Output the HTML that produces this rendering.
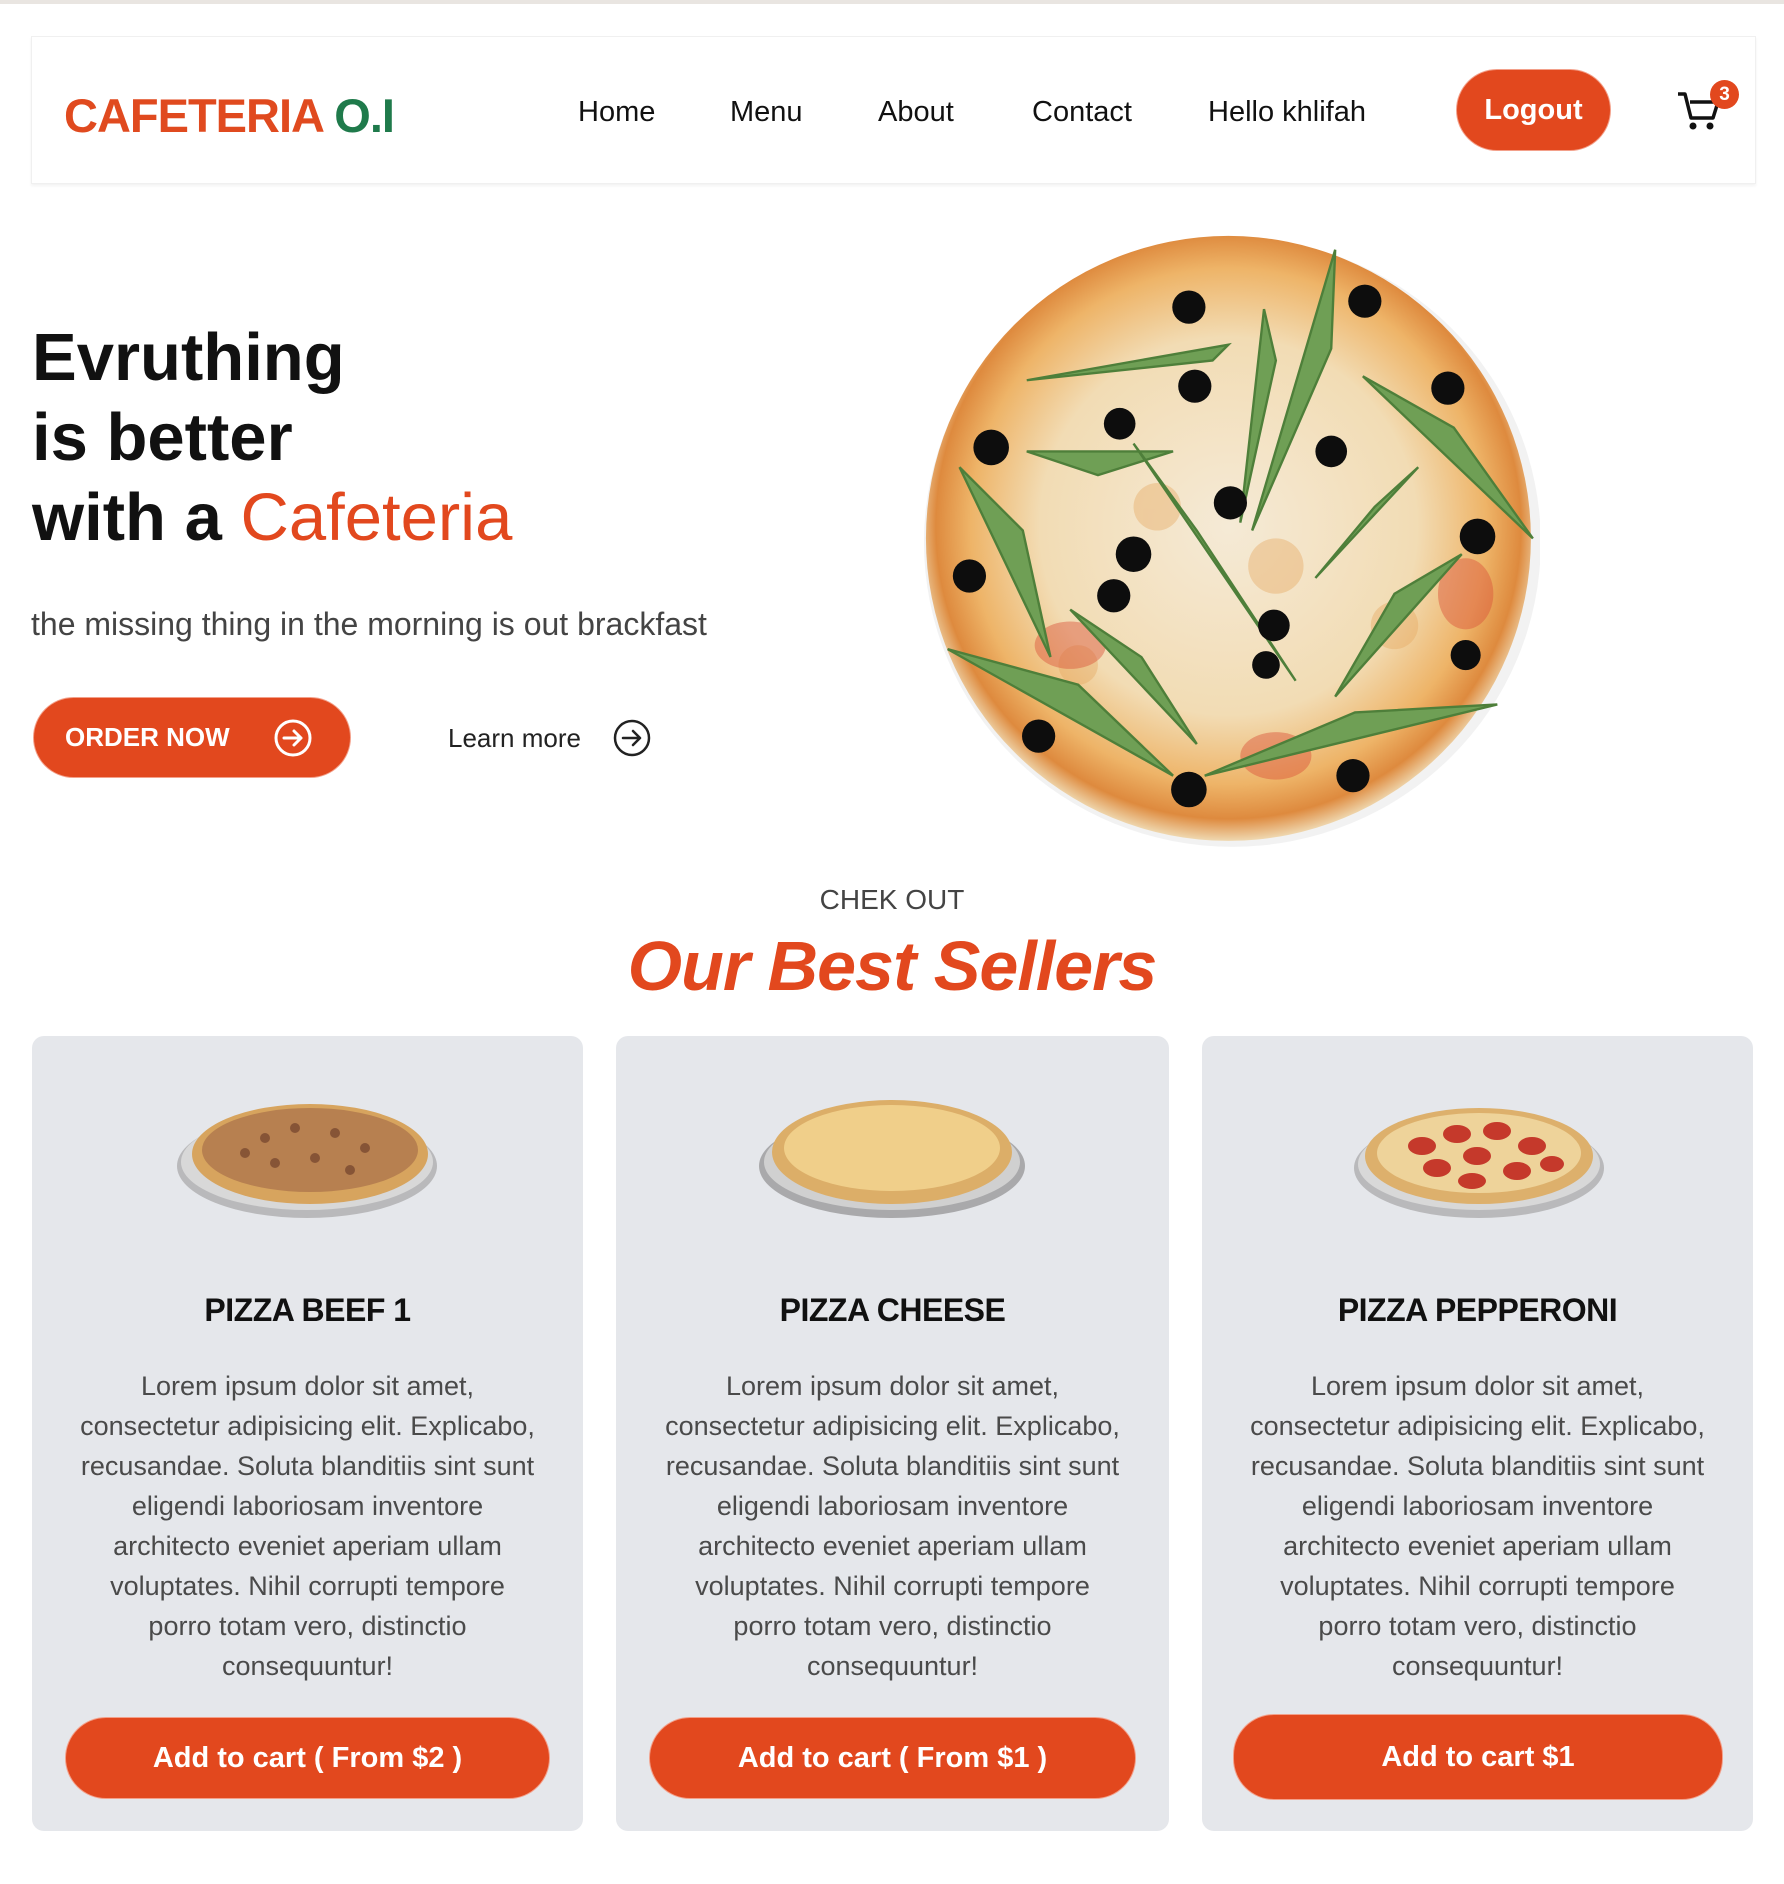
<!DOCTYPE html>
<html><head><meta charset="utf-8">
<style>
*{margin:0;padding:0;box-sizing:border-box}
body{width:1784px;height:1884px;background:#fff;position:relative;overflow:hidden;font-family:"Liberation Sans",Arial,sans-serif;color:#111}
.abs{position:absolute}
.topline{left:0;top:0;width:1784px;height:4px;background:#e9e5e1}
.nav{left:31px;top:36px;width:1725px;height:148px;background:#fff;border:1px solid #f0f0f0;box-shadow:0 2px 3px rgba(0,0,0,.05)}
.logo{left:64px;top:88px;font-size:47px;font-weight:bold;color:#e04a1f;letter-spacing:-1px;white-space:nowrap}
.logo span{color:#1f7a4b}
.nl{top:96px;font-size:29px;color:#111;white-space:nowrap}
.logout{left:1457px;top:70px;width:153px;height:80px;border-radius:40px;background:#e2481e;color:#fff;font-size:29px;font-weight:bold;display:flex;align-items:center;justify-content:center;box-shadow:0 0 0 1px #f3a08a}
.badge{left:1710px;top:80px;width:29px;height:29px;border-radius:50%;background:#e2481e;color:#fff;font-size:19px;font-weight:bold;display:flex;align-items:center;justify-content:center}
.h1{left:32px;font-size:67px;font-weight:bold;color:#111;white-space:nowrap;line-height:80px}
.sub{left:31px;top:606px;font-size:32px;color:#444;white-space:nowrap}
.order{left:34px;top:698px;width:316px;height:79px;border-radius:40px;background:#e2481e;box-shadow:0 0 0 1px #f3a08a}
.order .t{position:absolute;left:31px;top:24px;color:#fff;font-size:26px;font-weight:bold}
.learn{left:448px;top:723px;font-size:26px;color:#222}
.chek{left:0;width:1784px;text-align:center;top:884px;font-size:28px;color:#444}
.best{left:0;width:1784px;text-align:center;top:926px;font-size:70px;font-weight:bold;font-style:italic;color:#e2481e;letter-spacing:-1px}
.card{top:1036px;height:795px;background:#e5e7eb;border-radius:12px}
.ct{top:1292px;width:100%;text-align:center;font-size:32px;font-weight:bold;color:#111;letter-spacing:-.5px}
.cp{top:1366px;width:100%;text-align:center;font-size:27px;line-height:40px;color:#4a4a4a;white-space:nowrap}
.btn{top:682px;height:80px;border-radius:40px;background:#e2481e;color:#fff;font-size:29px;font-weight:bold;display:flex;align-items:center;justify-content:center;box-shadow:0 0 0 1px #f3a08a}
</style></head><body>
<div class="abs topline"></div>
<div class="abs nav"></div>
<div class="abs logo">CAFETERIA <span>O.I</span></div>
<div class="abs nl" style="left:578px">Home</div>
<div class="abs nl" style="left:730px">Menu</div>
<div class="abs nl" style="left:878px">About</div>
<div class="abs nl" style="left:1032px">Contact</div>
<div class="abs nl" style="left:1208px">Hello khlifah</div>
<div class="abs logout">Logout</div>
<svg class="abs" style="left:1676px;top:88px" width="46" height="44" viewBox="0 0 46 44"><path d="M2 6h7l6 24h22l5-16H14" fill="none" stroke="#111" stroke-width="3.5" stroke-linejoin="round"/><circle cx="17" cy="38" r="3.5" fill="#111"/><circle cx="34" cy="38" r="3.5" fill="#111"/></svg>
<div class="abs badge">3</div>

<div class="abs h1" style="top:318px">Evruthing</div>
<div class="abs h1" style="top:398px">is better</div>
<div class="abs h1" style="top:478px">with a <span style="color:#e2481e;font-weight:normal">Cafeteria</span></div>
<div class="abs sub">the missing thing in the morning is out brackfast</div>
<div class="abs order"><div class="t">ORDER NOW</div>
<svg style="position:absolute;left:239px;top:20px" width="40" height="40" viewBox="0 0 40 40"><circle cx="20" cy="20" r="17" fill="none" stroke="#fff" stroke-width="3"/><path d="M11 20h17M21 13l7 7-7 7" fill="none" stroke="#fff" stroke-width="3" stroke-linecap="round" stroke-linejoin="round"/></svg></div>
<div class="abs learn">Learn more</div>
<svg class="abs" style="left:612px;top:718px" width="40" height="40" viewBox="0 0 40 40"><circle cx="20" cy="20" r="17" fill="none" stroke="#222" stroke-width="2.5"/><path d="M11 20h17M21 13l7 7-7 7" fill="none" stroke="#222" stroke-width="2.5" stroke-linecap="round" stroke-linejoin="round"/></svg>

<svg class="abs" style="left:920px;top:230px" width="620" height="620" viewBox="0 0 1568 1568">
<defs>
<radialGradient id="pz" cx="50%" cy="48%" r="52%">
<stop offset="0" stop-color="#f5ead6"/><stop offset=".6" stop-color="#f2dcb4"/><stop offset=".82" stop-color="#eeb468"/><stop offset=".93" stop-color="#de8a3e"/><stop offset="1" stop-color="#efd8b0"/></radialGradient>
</defs>
<ellipse cx="790" cy="790" rx="780" ry="770" fill="#000" opacity=".05"/>
<circle cx="780" cy="780" r="765" fill="url(#pz)"/>
<g fill="#e6a860" opacity=".4"><circle cx="600" cy="700" r="60"/><circle cx="900" cy="850" r="70"/><circle cx="1200" cy="1000" r="60"/><circle cx="400" cy="1100" r="50"/></g>
<g fill="#d9513a" opacity=".45"><ellipse cx="380" cy="1050" rx="90" ry="60"/><ellipse cx="900" cy="1330" rx="90" ry="60"/><ellipse cx="1380" cy="920" rx="70" ry="90"/></g>
<g fill="#6f9f55" stroke="#4e7f3a" stroke-width="6" stroke-linecap="round">
<path d="M270 380 L780 290 L740 330 Z"/><path d="M810 740 L870 200 L900 330 Z"/><path d="M840 760 L1050 50 L1040 300 Z"/>
<path d="M1120 370 L1550 780 L1350 500 Z"/><path d="M1000 880 L1260 600 L1150 700 Z"/><path d="M1050 1180 L1370 820 L1200 920 Z"/>
<path d="M100 600 L330 1080 L260 760 Z"/><path d="M70 1060 L640 1380 L400 1150 Z"/><path d="M270 560 L640 560 L450 620 Z"/>
<path d="M540 540 L950 1140 L700 760 Z"/><path d="M380 960 L700 1300 L560 1080 Z"/><path d="M720 1380 L1460 1200 L1100 1220 Z"/>
</g>
<g fill="#0d0d0d">
<circle cx="680" cy="195" r="42"/><circle cx="1125" cy="180" r="42"/><circle cx="695" cy="395" r="42"/><circle cx="1335" cy="400" r="42"/>
<circle cx="180" cy="550" r="45"/><circle cx="505" cy="490" r="40"/><circle cx="1040" cy="560" r="40"/><circle cx="785" cy="690" r="42"/>
<circle cx="1410" cy="775" r="45"/><circle cx="540" cy="820" r="45"/><circle cx="125" cy="875" r="42"/><circle cx="490" cy="925" r="42"/>
<circle cx="895" cy="1000" r="40"/><circle cx="1380" cy="1075" r="38"/><circle cx="875" cy="1100" r="35"/><circle cx="300" cy="1280" r="42"/>
<circle cx="680" cy="1415" r="45"/><circle cx="1095" cy="1380" r="42"/></g>
</svg>

<div class="abs chek">CHEK OUT</div>
<div class="abs best">Our Best Sellers</div>

<div class="abs card" style="left:32px;width:551px">
<svg style="position:absolute;left:143px;top:52px" width="264" height="140" viewBox="0 0 264 140"><ellipse cx="132" cy="78" rx="130" ry="52" fill="#b9b9bb"/><ellipse cx="132" cy="74" rx="126" ry="48" fill="#d8d8d8"/><ellipse cx="135" cy="66" rx="118" ry="50" fill="#d7a45e"/><ellipse cx="135" cy="62" rx="108" ry="42" fill="#b78050"/><g fill="#7a4a30" opacity=".8"><circle cx="90" cy="50" r="5"/><circle cx="120" cy="40" r="5"/><circle cx="160" cy="45" r="5"/><circle cx="190" cy="60" r="5"/><circle cx="100" cy="75" r="5"/><circle cx="140" cy="70" r="5"/><circle cx="175" cy="82" r="5"/><circle cx="70" cy="65" r="5"/></g></svg>
<div class="abs ct" style="top:256px">PIZZA BEEF 1</div>
<div class="abs cp" style="top:330px">Lorem ipsum dolor sit amet,<br>consectetur adipisicing elit. Explicabo,<br>recusandae. Soluta blanditiis sint sunt<br>eligendi laboriosam inventore<br>architecto eveniet aperiam ullam<br>voluptates. Nihil corrupti tempore<br>porro totam vero, distinctio<br>consequuntur!</div>
<div class="abs btn" style="left:34px;width:483px">Add to cart ( From $2 )</div>
</div>

<div class="abs card" style="left:616px;width:553px">
<svg style="position:absolute;left:141px;top:50px" width="270" height="140" viewBox="0 0 270 140"><ellipse cx="135" cy="80" rx="133" ry="52" fill="#a9a9ab"/><ellipse cx="135" cy="76" rx="128" ry="48" fill="#d0d0d0"/><ellipse cx="135" cy="66" rx="120" ry="52" fill="#dcae68"/><ellipse cx="135" cy="62" rx="108" ry="43" fill="#f0cf8a"/></svg>
<div class="abs ct" style="top:256px">PIZZA CHEESE</div>
<div class="abs cp" style="top:330px">Lorem ipsum dolor sit amet,<br>consectetur adipisicing elit. Explicabo,<br>recusandae. Soluta blanditiis sint sunt<br>eligendi laboriosam inventore<br>architecto eveniet aperiam ullam<br>voluptates. Nihil corrupti tempore<br>porro totam vero, distinctio<br>consequuntur!</div>
<div class="abs btn" style="left:34px;width:485px">Add to cart ( From $1 )</div>
</div>

<div class="abs card" style="left:1202px;width:551px">
<svg style="position:absolute;left:150px;top:60px" width="254" height="130" viewBox="0 0 254 130"><ellipse cx="127" cy="72" rx="125" ry="50" fill="#b9b9bb"/><ellipse cx="127" cy="68" rx="121" ry="46" fill="#d8d8d8"/><ellipse cx="127" cy="60" rx="114" ry="48" fill="#ddb06c"/><ellipse cx="127" cy="57" rx="102" ry="40" fill="#eed39a"/><g fill="#c5392b"><ellipse cx="70" cy="50" rx="14" ry="9"/><ellipse cx="105" cy="38" rx="14" ry="9"/><ellipse cx="145" cy="35" rx="14" ry="9"/><ellipse cx="180" cy="50" rx="14" ry="9"/><ellipse cx="85" cy="72" rx="14" ry="9"/><ellipse cx="125" cy="60" rx="14" ry="9"/><ellipse cx="165" cy="75" rx="14" ry="9"/><ellipse cx="200" cy="68" rx="12" ry="8"/><ellipse cx="120" cy="85" rx="14" ry="8"/></g></svg>
<div class="abs ct" style="top:256px">PIZZA PEPPERONI</div>
<div class="abs cp" style="top:330px">Lorem ipsum dolor sit amet,<br>consectetur adipisicing elit. Explicabo,<br>recusandae. Soluta blanditiis sint sunt<br>eligendi laboriosam inventore<br>architecto eveniet aperiam ullam<br>voluptates. Nihil corrupti tempore<br>porro totam vero, distinctio<br>consequuntur!</div>
<div class="abs btn" style="left:32px;width:488px;top:679px;height:84px">Add to cart $1</div>
</div>
</body></html>
